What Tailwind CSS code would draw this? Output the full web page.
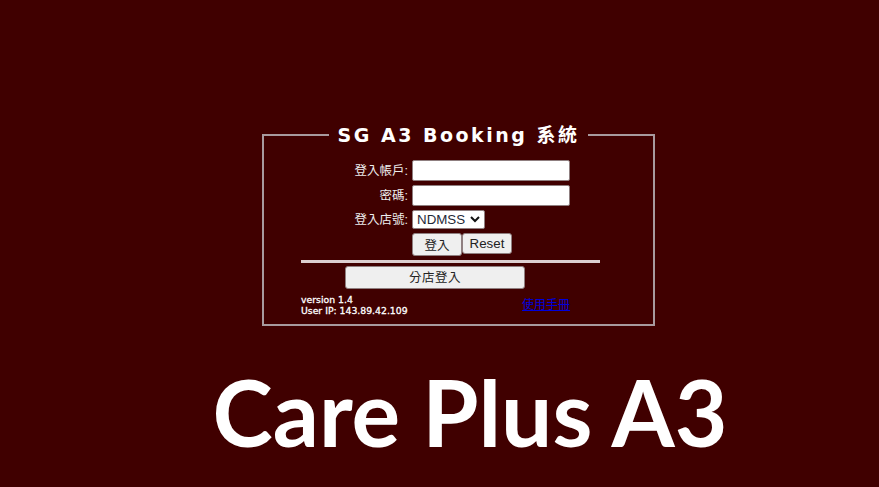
<!DOCTYPE html>
<html lang="zh-Hant">
<head>
    <meta charset="UTF-8">
    <title>SG A3 Booking</title>
    <script src="https://cdn.jsdelivr.net/npm/@tailwindcss/browser@4"></script>
</head>
<body class="bg-[#400000] h-[487px] overflow-hidden font-['Liberation_Sans','Noto_Sans_CJK_TC',sans-serif] text-white">

    <!-- Login box -->
    <div class="pt-[125px] pl-[262px]">
        <fieldset class="w-[393px] h-[201px] border-2 border-[#a89a9e] px-[37px]">
            <legend class="mx-auto px-[9px] text-[19px] leading-[20px] font-bold tracking-[2.5px] font-['DejaVu_Sans','Noto_Sans_CJK_TC',sans-serif]">SG A3 Booking 系統</legend>

            <div class="flex flex-col pt-[13px]">
                <div class="flex items-center h-[25px]">
                    <label class="w-[111px] text-right text-[12.5px] pr-[4px] pt-[2px] text-[#eeeeee]">登入帳戶:</label>
                    <input type="text" class="w-[158px] h-[21px] bg-white rounded-[2px] border border-[#8f7f80]">
                </div>
                <div class="flex items-center h-[25px]">
                    <label class="w-[111px] text-right text-[12.5px] pr-[4px] pt-[2px] text-[#eeeeee]">密碼:</label>
                    <input type="password" class="w-[158px] h-[21px] bg-white rounded-[2px] border border-[#8f7f80]">
                </div>
                <div class="flex items-center h-[22px]">
                    <label class="w-[111px] text-right text-[12.5px] pr-[4px] pt-[2px] text-[#eeeeee]">登入店號:</label>
                    <div class="relative w-[73px] h-[19px] bg-white rounded-[2px] border border-[#8f7f80] text-[#1f2937] text-[13.33px] leading-[17px] pl-[4px]">
                        NDMSS
                        <svg class="absolute right-[4px] top-[5px]" width="10" height="7" viewBox="0 0 10 7" fill="none" stroke="#111" stroke-width="2"><path d="M1 1l4 4 4-4"/></svg>
                    </div>
                </div>
                <div class="flex items-start h-[26px] pl-[111px] pt-[3px]">
                    <button class="w-[50px] h-[23px] bg-[#efefef] border border-[#8f7f80] rounded-[3px] text-[12.5px] text-[#222222] pt-[3px]">登入</button>
                    <button class="w-[50px] h-[21px] bg-[#efefef] border border-[#8f7f80] rounded-[3px] text-[13.33px] text-[#222222] leading-[17px]">Reset</button>
                </div>
                <div class="h-[3px] w-[299px] bg-[#dccfd0] mt-[4px]"></div>
                <div class="pl-[44px] pt-[2px]">
                    <button class="w-[180px] h-[23px] bg-[#efefef] border border-[#8f7f80] rounded-[3px] text-[12.5px] text-[#222222] tracking-[0.5px] pt-[2px]">分店登入</button>
                </div>
                <div class="flex items-center mt-[5px]">
                    <p class="w-[221px] text-[9.3px] leading-[11px] font-['DejaVu_Sans',sans-serif] text-white [-webkit-text-stroke:0.3px_#ffffff]">version 1.4<br>User IP: 143.89.42.109</p>
                    <a href="#" class="text-[12px] text-[#0000dd] underline">使用手冊</a>
                </div>
            </div>
        </fieldset>
    </div>

    <!-- Big title -->
    <h1 class="mt-[26px] pl-[61px] text-center text-[91px] leading-[120px] font-bold font-['Lato',sans-serif] text-white">Care Plus A3</h1>
</body>
</html>
